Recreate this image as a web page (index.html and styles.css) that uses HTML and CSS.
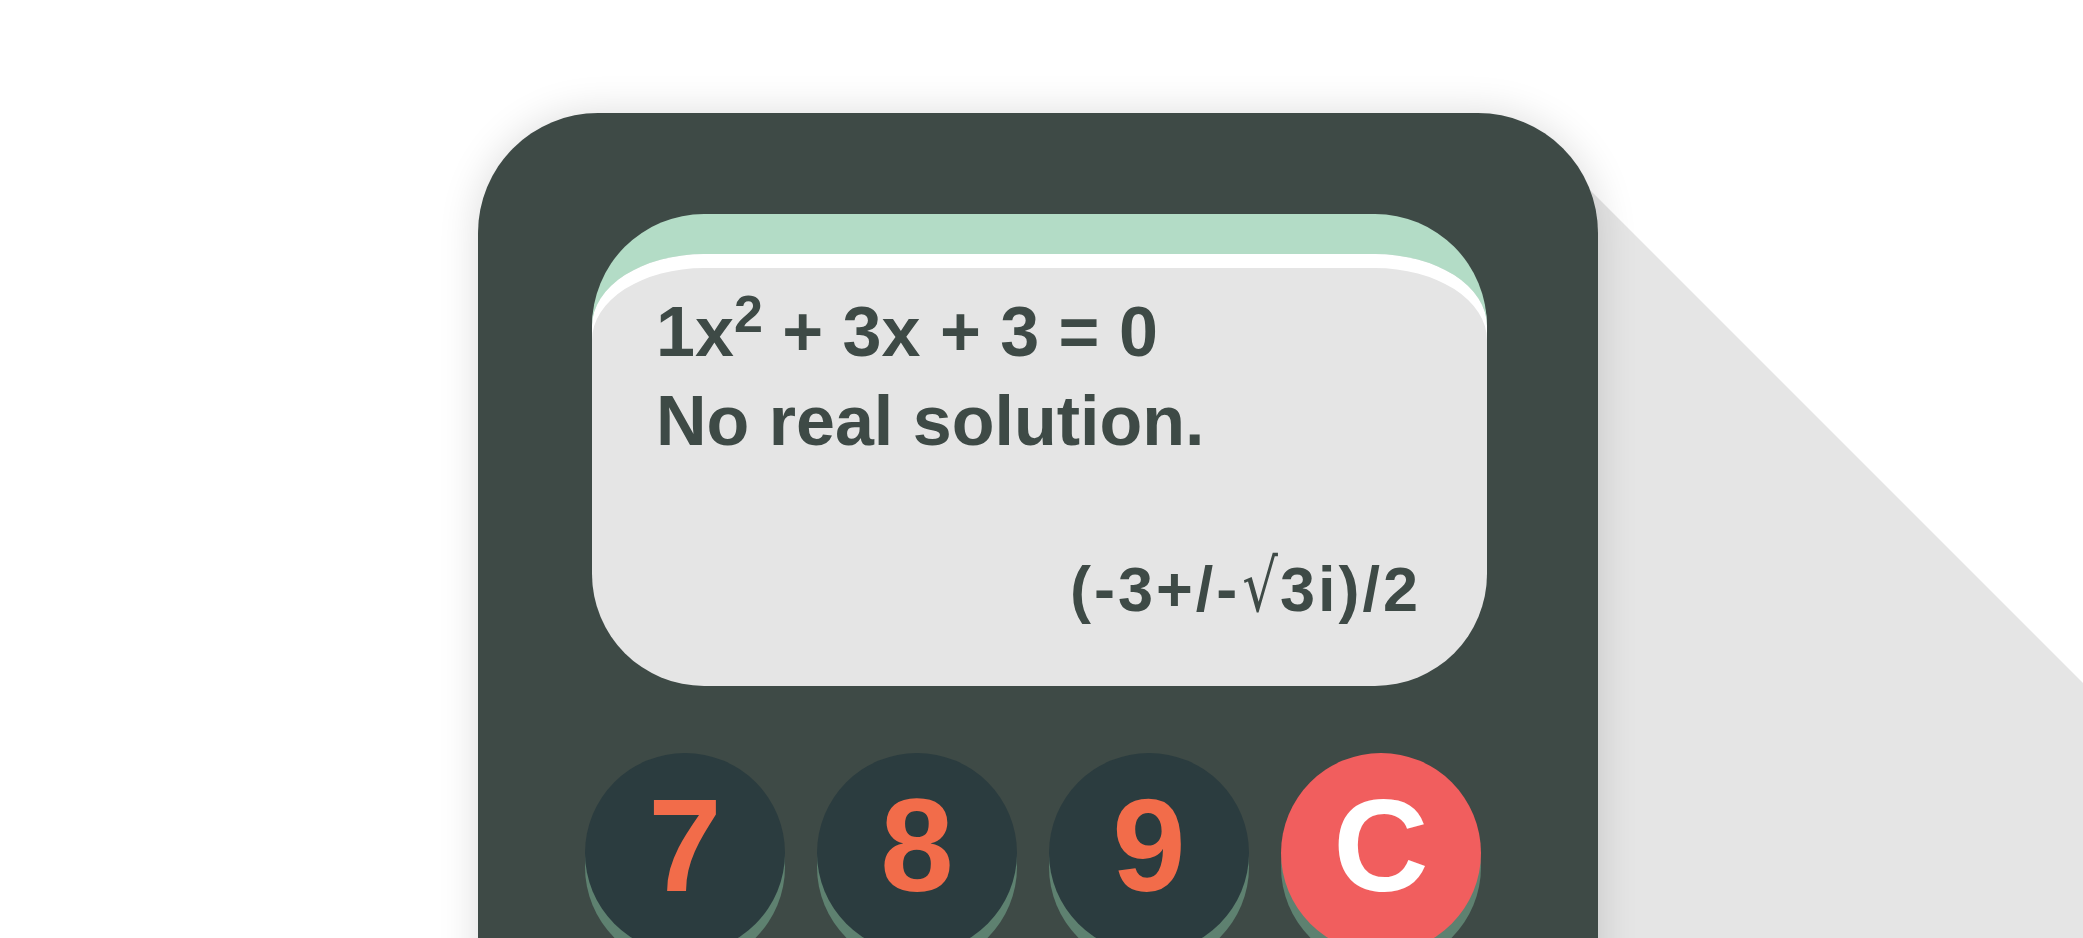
FILE: index.html
```html
<!DOCTYPE html>
<html lang="en">
<head>
<meta charset="utf-8">
<title>Quadratic Calculator</title>
<link rel="stylesheet" href="styles.css">
</head>
<body>
<main class="page">
  <div class="calc">
    <div class="screen">
      <div class="eq">1x<sup>2</sup> + 3x + 3 = 0</div>
      <div class="msg">No real solution.</div>
      <div class="result">(-3+/-<span class="root">√</span>3i)/2</div>
    </div>
    <div class="keys">
      <button class="key">7</button>
      <button class="key">8</button>
      <button class="key">9</button>
      <button class="key clear">C</button>
    </div>
  </div>
</main>
</body>
</html>
```

FILE: styles.css
```css
html {
  background: #ffffff;
}

html, body {
  margin: 0;
  height: 100%;
  overflow: hidden;
}

.page {
  padding: 113px 0 0 478px;
}

.calc {
  position: relative;
  width: 1120px;
  height: 1200px;
  box-sizing: border-box;
  padding: 101px 111px 0 114px;
  background: #3e4a46;
  border-radius: 120px;
  box-shadow: 0 0 40px rgba(0, 0, 0, 0.14);
  font-family: "Liberation Sans", Arial, sans-serif;
  font-weight: bold;
}

/* long 45deg flat shadow */
.calc::before {
  content: "";
  position: absolute;
  left: 1100px;
  top: 65px;
  width: 2200px;
  height: 2200px;
  background: #e5e5e5;
  clip-path: polygon(0 0, 100% 100%, 0 100%);
  z-index: -1;
}

.screen {
  height: 472px;
  box-sizing: border-box;
  display: flex;
  flex-direction: column;
  padding: 34px 66px 57px 64px;
  background: #e5e5e5;
  border-top: 40px solid #b3dcc6;
  border-radius: 112px;
  box-shadow: inset 0 14px 0 #ffffff;
  color: #3e4a46;
}

.eq,
.msg {
  font-size: 70px;
  line-height: 89px;
}

.eq sup {
  font-size: 52px;
  line-height: 0;
  vertical-align: 24px;
}

.result {
  margin-top: auto;
  font-size: 63px;
  line-height: 80px;
  letter-spacing: 3px;
  text-align: right;
}

.result .root {
  display: inline-block;
  font-family: "DejaVu Sans", sans-serif;
  font-weight: normal;
  font-size: 56px;
  line-height: 56px;
  letter-spacing: 0;
  margin: 0 2px;
  transform: scaleY(1.28);
  transform-origin: 50% 48px;
}

.keys {
  display: flex;
  gap: 32px;
  margin: 67px 0 0 -7px;
}

.key {
  width: 200px;
  height: 200px;
  flex: none;
  padding: 0 0 14px;
  border: none;
  border-radius: 50%;
  background: #2b3c3f;
  color: #f26c4a;
  font-family: "Liberation Sans", Arial, sans-serif;
  font-weight: bold;
  font-size: 132px;
  line-height: 1;
  text-align: center;
  box-shadow: 0 14px 0 #5e8170;
}

.key.clear {
  background: #f15e5e;
  color: #ffffff;
}
```
